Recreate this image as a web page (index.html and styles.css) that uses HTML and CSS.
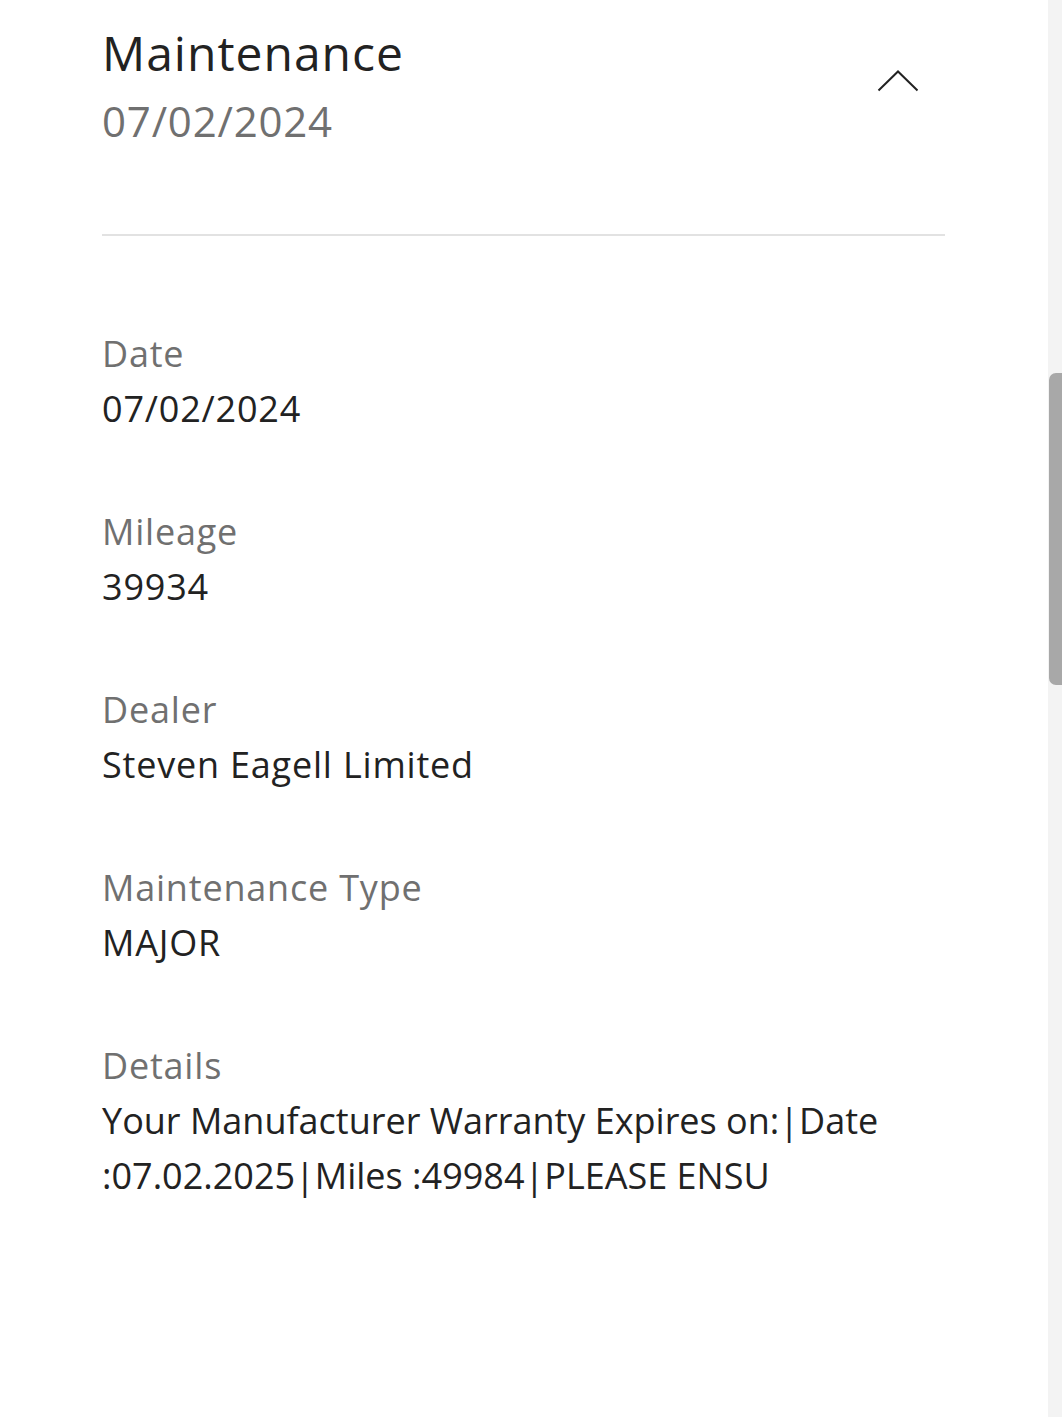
FILE: index.html
```html
<!DOCTYPE html>
<html lang="en">
<head>
<meta charset="utf-8">
<title>Maintenance</title>
<link rel="stylesheet" href="styles.css">
</head>
<body>
<main class="page">
  <section class="card">
    <header class="card-head">
      <div class="head-text">
        <h1 class="title">Maintenance</h1>
        <div class="subtitle">07/02/2024</div>
      </div>
      <button class="toggle" aria-label="Collapse">
        <svg width="42" height="22" viewBox="0 0 42 22" fill="none" stroke="#222" stroke-width="2">
          <path d="M1.5 20.5 L21 1.5 L40.5 20.5"/>
        </svg>
      </button>
    </header>
    <hr class="divider">
    <dl class="fields">
      <div class="field"><dt>Date</dt><dd>07/02/2024</dd></div>
      <div class="field"><dt>Mileage</dt><dd>39934</dd></div>
      <div class="field"><dt>Dealer</dt><dd>Steven Eagell Limited</dd></div>
      <div class="field"><dt>Maintenance Type</dt><dd>MAJOR</dd></div>
      <div class="field"><dt>Details</dt><dd class="long">Your Manufacturer Warranty Expires on:|Date :07.02.2025|Miles :49984|PLEASE ENSU</dd></div>
    </dl>
  </section>
</main>
<div class="scrollbar"><div class="thumb"></div></div>
</body>
</html>
```
FILE: styles.css
```css
html, body {
  margin: 0;
  padding: 0;
  background: #ffffff;
}
body {
  font-family: "Open Sans", Lato, sans-serif;
  color: #222222;
  width: 1062px;
  height: 1417px;
  overflow: hidden;
}
.page {
  padding: 0 117px 0 102px;
}
.card-head {
  display: flex;
  justify-content: space-between;
  align-items: flex-start;
  padding-top: 20px;
}
.title {
  margin: 0;
  font-size: 48px;
  line-height: 66px;
  font-weight: 500;
  letter-spacing: 1px;
  color: #222;
}
.subtitle {
  font-size: 42px;
  line-height: 70px;
  letter-spacing: 0.8px;
  color: #707070;
}
.toggle {
  background: none;
  border: 0;
  padding: 0;
  margin: 50px 26px 0 0;
  line-height: 0;
}
.divider {
  border: 0;
  height: 2px;
  background: #e2e2e2;
  margin: 78px 0 0 0;
}
.fields {
  margin: 90px 0 0 0;
  display: flex;
  flex-direction: column;
  gap: 68px;
}
.field dt {
  font-size: 36px;
  line-height: 55px;
  letter-spacing: 0.8px;
  color: #707070;
}
.field dd {
  margin: 0;
  font-size: 36px;
  line-height: 55px;
  letter-spacing: 0.8px;
  color: #222;
}
.field dd.long {
  letter-spacing: 0;
}
.scrollbar {
  position: absolute;
  top: 0;
  right: 0;
  width: 14px;
  height: 1417px;
  background: #f3f3f3;
}
.thumb {
  position: absolute;
  top: 373px;
  right: 0;
  width: 13px;
  height: 312px;
  background: #a8a8a8;
  border-radius: 7px 0 0 7px;
}
```
